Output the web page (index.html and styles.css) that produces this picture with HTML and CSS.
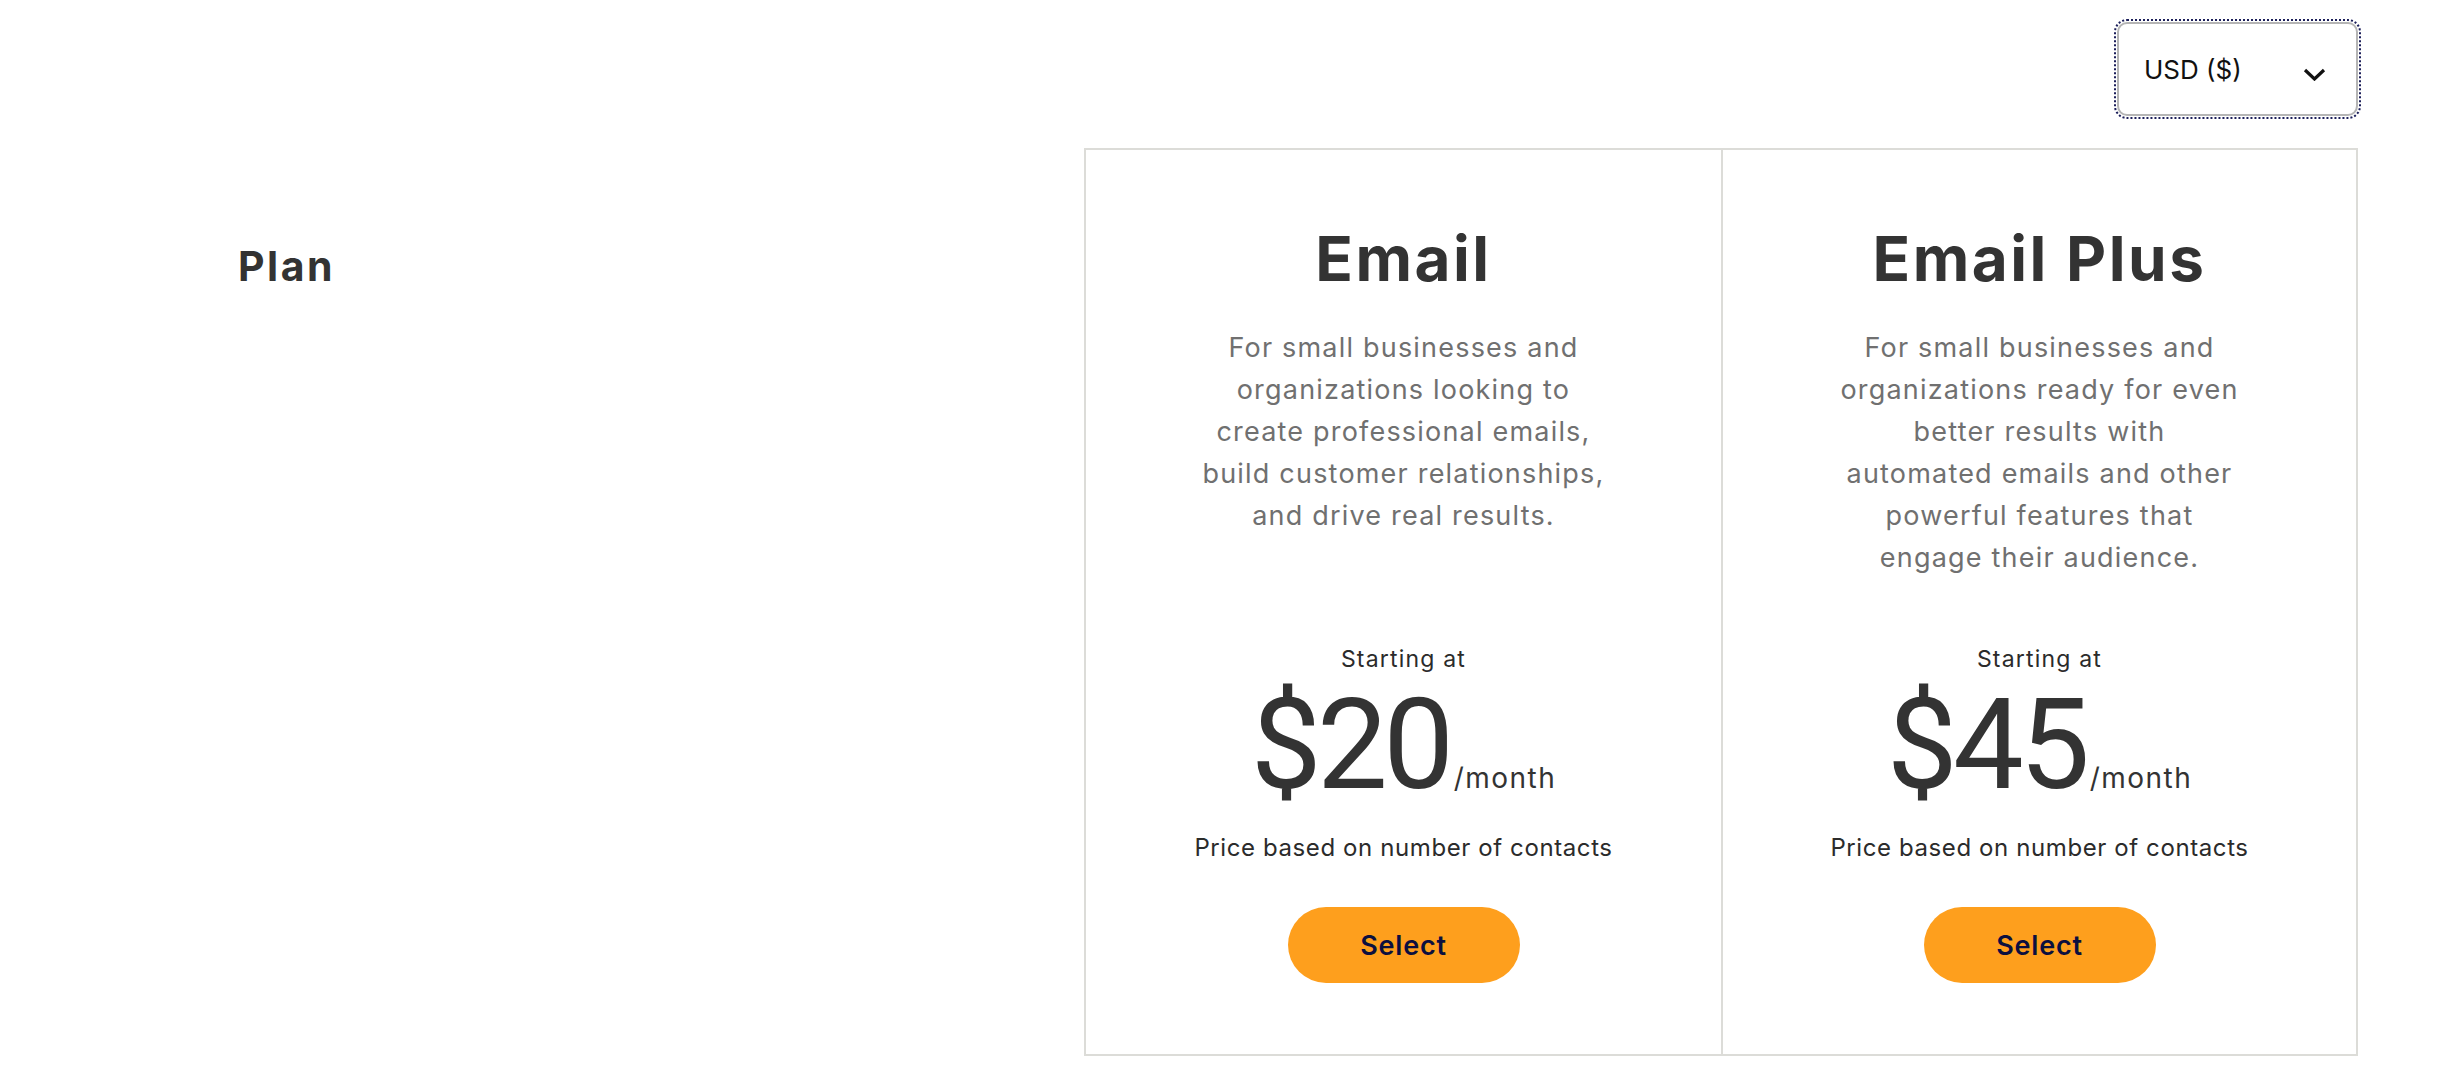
FILE: index.html
```html
<!DOCTYPE html>
<html lang="en">
<head>
<meta charset="utf-8">
<title>Plans</title>
<link rel="stylesheet" href="styles.css">
</head>
<body>
<div class="page">
  <header class="topbar">
    <div class="currency" tabindex="0">
      <span class="currency-label">USD ($)</span>
      <svg class="chevron" width="23" height="13" viewBox="0 0 23 13" aria-hidden="true">
        <path d="M2 2 L11.5 11 L21 2" fill="none" stroke="#111" stroke-width="3.2" stroke-linecap="butt" stroke-linejoin="miter"/>
      </svg>
    </div>
  </header>
  <section class="compare">
    <div class="plan-col">
      <h2 class="plan-title">Plan</h2>
    </div>
    <div class="cards">
      <article class="card">
        <h3 class="card-title">Email</h3>
        <p class="desc">For small businesses and<br>organizations looking to<br>create professional emails,<br>build customer relationships,<br>and drive real results.</p>
        <p class="starting">Starting at</p>
        <p class="price"><span class="amount">$20</span><span class="period">/month</span></p>
        <p class="billing">Price based on number of contacts</p>
        <button class="select-btn" type="button">Select</button>
      </article>
      <article class="card">
        <h3 class="card-title">Email Plus</h3>
        <p class="desc">For small businesses and<br>organizations ready for even<br>better results with<br>automated emails and other<br>powerful features that<br>engage their audience.</p>
        <p class="starting">Starting at</p>
        <p class="price"><span class="amount">$45</span><span class="period">/month</span></p>
        <p class="billing">Price based on number of contacts</p>
        <button class="select-btn" type="button">Select</button>
      </article>
    </div>
  </section>
</div>
</body>
</html>
```
FILE: styles.css
```css
* { box-sizing: border-box; }

body {
  margin: 0;
  background: #ffffff;
  font-family: Inter, "Open Sans", "Noto Sans", sans-serif;
  color: #333333;
}

.page {
  padding: 22px 86px 0 0;
}

.topbar {
  display: flex;
  justify-content: flex-end;
}

.currency {
  width: 241px;
  height: 94px;
  border: 2px solid #b5b5b5;
  border-radius: 10px;
  outline: 2px dotted #1c1f5a;
  outline-offset: 1px;
  display: flex;
  align-items: center;
  justify-content: space-between;
  padding: 0 30px 0 25px;
  font-size: 26px;
  color: #111111;
}

.chevron {
  display: block;
  margin-top: 10px;
}

.compare {
  display: flex;
  margin-top: 32px;
}

.plan-col {
  flex: 1;
  padding: 94px 0 0 238px;
}

.plan-title {
  margin: 0;
  font-size: 41px;
  line-height: 49px;
  font-weight: 700;
  letter-spacing: 2.5px;
  color: #333333;
}

.cards {
  width: 1274px;
  display: grid;
  grid-template-columns: 1fr 1fr;
  border: 2px solid #dcdcd8;
}

.card {
  display: flex;
  flex-direction: column;
  align-items: center;
  text-align: center;
  padding: 72px 20px 71px;
}

.card + .card {
  border-left: 2px solid #dcdcd8;
}

.card-title {
  margin: 0;
  font-size: 62px;
  line-height: 74px;
  font-weight: 700;
  letter-spacing: 2.5px;
  color: #333333;
}

.desc {
  margin: 31px 0 0;
  min-height: 252px;
  font-size: 27px;
  line-height: 42px;
  letter-spacing: 1.2px;
  color: #707070;
}

.starting {
  margin: 64px 0 0;
  font-size: 23px;
  line-height: 32px;
  letter-spacing: 1.2px;
  color: #2b2b2b;
}

.price {
  margin: 7px 0 0;
  font-family: Roboto, "Liberation Sans", sans-serif;
  font-size: 126px;
  line-height: 1;
  color: #333333;
}

.amount {
  letter-spacing: -4.5px;
}

.period {
  font-family: Inter, "Open Sans", sans-serif;
  font-size: 28px;
  letter-spacing: 1.5px;
  margin-left: 4px;
}

.billing {
  margin: 24px 0 0;
  font-size: 24px;
  line-height: 32px;
  letter-spacing: 0.6px;
  color: #2b2b2b;
}

.select-btn {
  margin-top: 43px;
  width: 232px;
  height: 76px;
  border: 0;
  border-radius: 38px;
  background: #fe9f1d;
  color: #0c0f3f;
  font-family: inherit;
  font-size: 27px;
  font-weight: 600;
  letter-spacing: 0.8px;
  cursor: pointer;
}
```
